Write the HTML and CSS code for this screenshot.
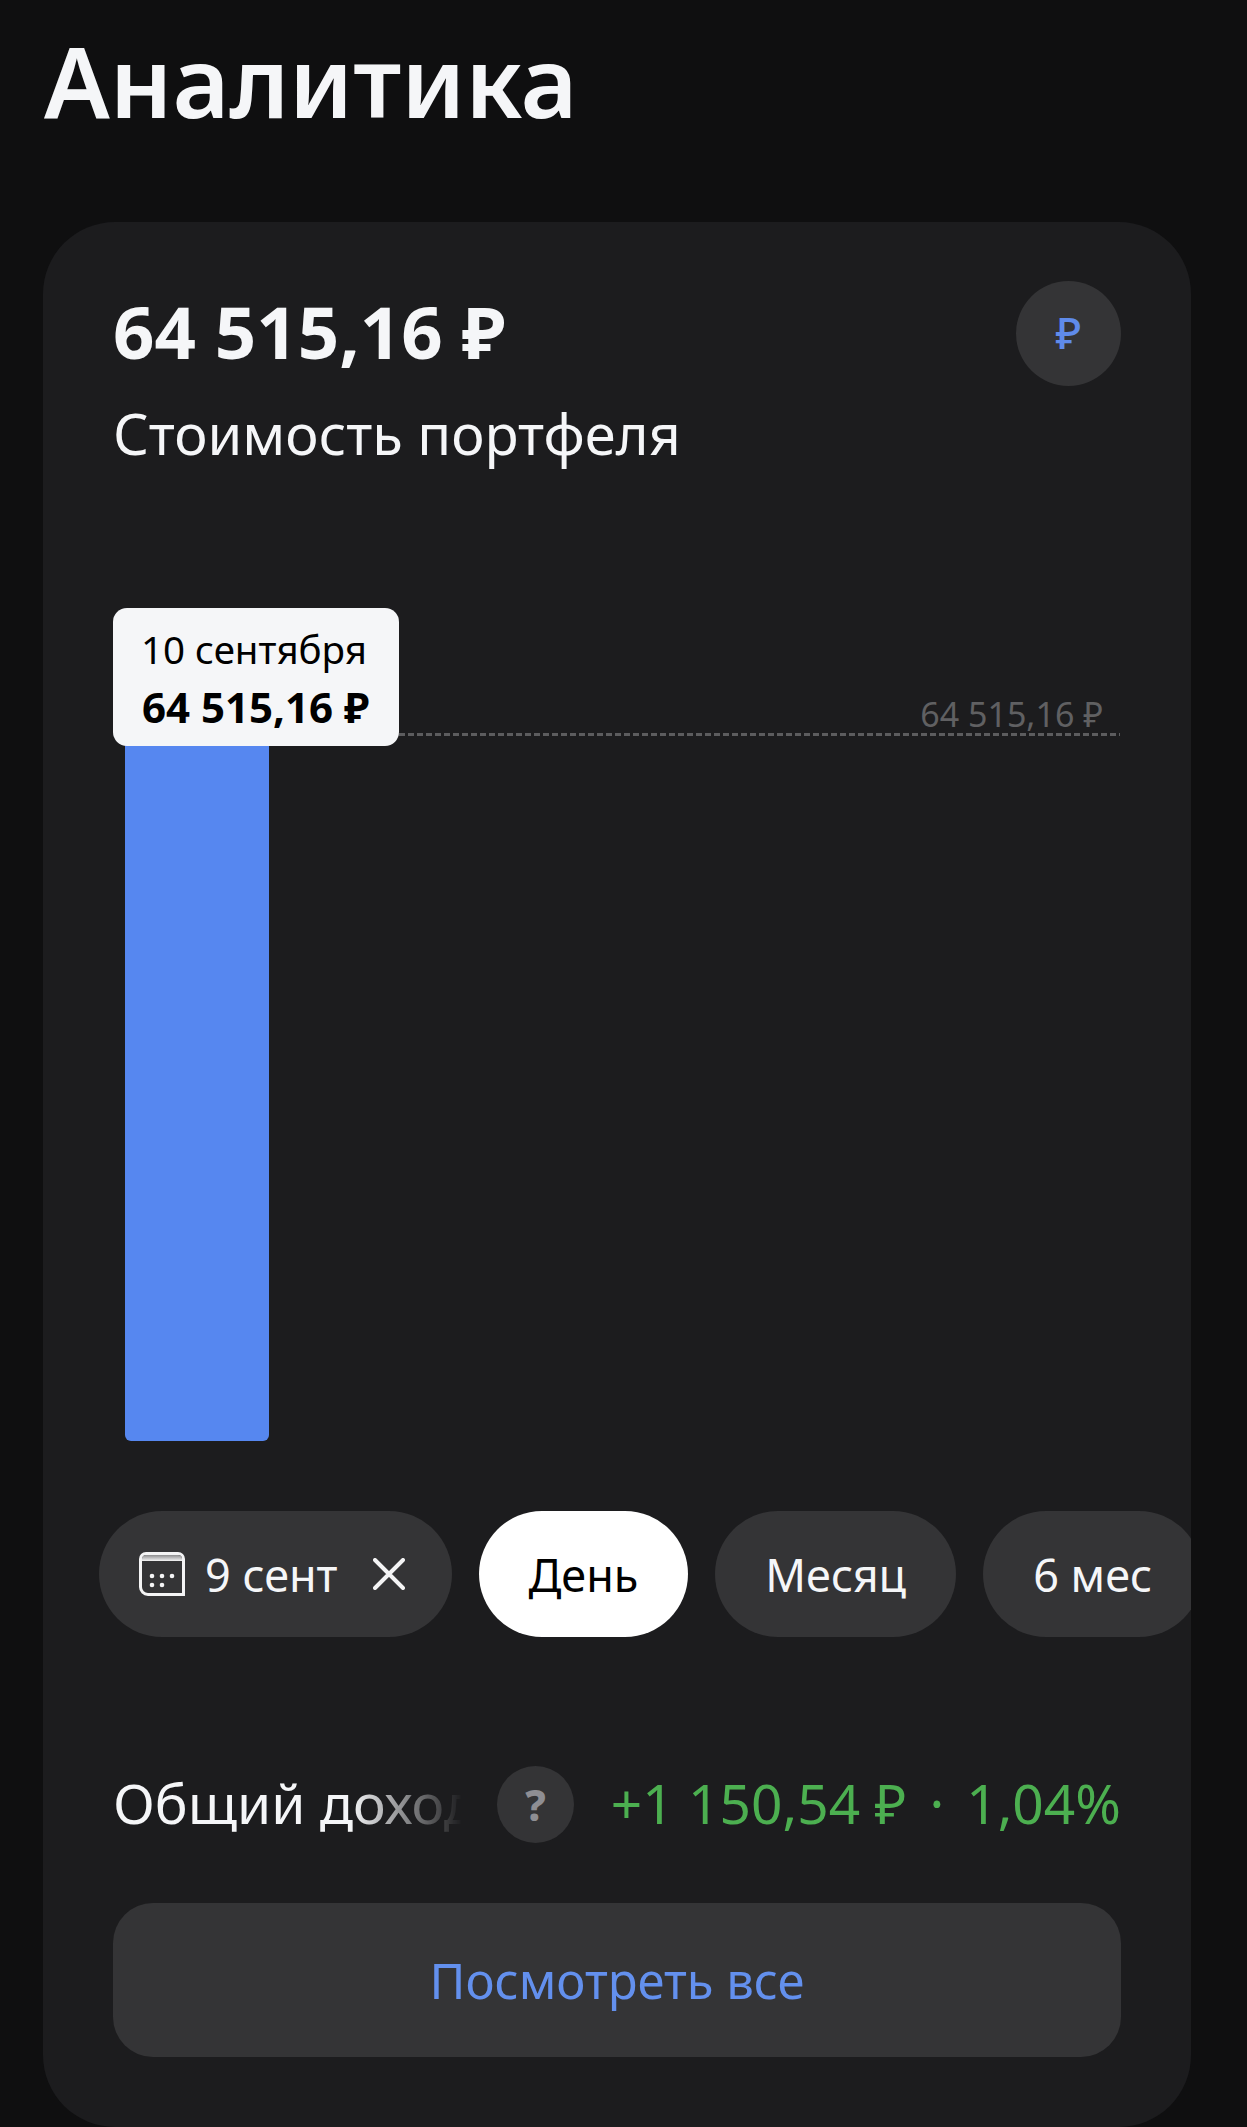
FILE: index.html
```html
<!DOCTYPE html>
<html lang="ru">
<head>
  <meta charset="UTF-8" />
  <title>Аналитика</title>
  <link rel="stylesheet" href="styles.css">
</head>
<body>
  <h1 class="page-title">Аналитика</h1>

  <section class="card">
    <div class="card-head">
      <div>
        <div class="total">64 515,16 ₽</div>
        <div class="subtitle">Стоимость портфеля</div>
      </div>
      <div class="currency">₽</div>
    </div>

    <div class="chart">
      <div class="bar"></div>
      <div class="max-line"></div>
      <div class="max-label">64 515,16 ₽</div>
      <div class="tooltip">
        <div class="tooltip-date">10 сентября</div>
        <div class="tooltip-value">64 515,16 ₽</div>
      </div>
    </div>

    <div class="chips">
      <div class="chip chip-date">
        <svg class="cal-icon" viewBox="0 0 46 44">
          <defs>
            <linearGradient id="calTop" x1="0" y1="0" x2="0" y2="1">
              <stop offset="0" stop-color="#8c8c8e"/>
              <stop offset="1" stop-color="#f4f4f5"/>
            </linearGradient>
          </defs>
          <path d="M7 1.500H39A5.500 5.500 0 0 1 44.500 7V42.500H9A7.500 7.500 0 0 1 1.500 35V7A5.500 5.500 0 0 1 7 1.500Z" fill="none" stroke="#f4f4f5" stroke-width="3"/>
          <path d="M3 9V7A4 4 0 0 1 7 3H39A4 4 0 0 1 43 7V9Z" fill="url(#calTop)"/>
          <circle cx="13" cy="24" r="2.300" fill="#f4f4f5"/>
          <circle cx="23" cy="24" r="2.300" fill="#f4f4f5"/>
          <circle cx="33" cy="24" r="2.300" fill="#f4f4f5"/>
          <circle cx="13" cy="33" r="2.300" fill="#f4f4f5"/>
          <circle cx="23" cy="33" r="2.300" fill="#f4f4f5"/>
        </svg>
        <span>9 сент</span>
        <svg class="close-icon" viewBox="0 0 32 32">
          <path d="M2 2L30 30M30 2L2 30" fill="none" stroke="#f4f4f5" stroke-width="4" stroke-linecap="round"/>
        </svg>
      </div>
      <div class="chip chip-active">День</div>
      <div class="chip">Месяц</div>
      <div class="chip">6 мес</div>
    </div>

    <div class="income">
      <span class="income-label">Общий доход</span>
      <span class="help">?</span>
      <span class="income-value">+1 150,54 ₽<span class="dot">·</span>1,04%</span>
    </div>

    <button class="view-all">Посмотреть все</button>
  </section>
</body>
</html>
```

FILE: styles.css
```css
body {
  margin: 0;
  height: 2127px;
  overflow: hidden;
  background: #0f0f10;
  color: #f5f6f8;
  font-family: "Noto Sans", sans-serif;
}
.page-title {
  margin: 0;
  height: 222px;
  padding-left: 44px;
  box-sizing: border-box;
  font-size: 98px;
  font-weight: 600;
  line-height: 160px;
}
.card {
  margin: 0 56px 0 43px;
  height: 1905px;
  box-sizing: border-box;
  padding: 59px 70px 0 70px;
  background: #1c1c1e;
  border-radius: 72px;
}
.card-head {
  display: flex;
  justify-content: space-between;
  align-items: flex-start;
}
.total {
  font-size: 72.500px;
  font-weight: 700;
  line-height: 100px;
}
.subtitle {
  margin-top: 17px;
  font-size: 56px;
  font-weight: 400;
  line-height: 70px;
}
.currency {
  width: 105px;
  height: 105px;
  border-radius: 50%;
  background: #343436;
  color: #5f8bea;
  font-size: 44px;
  font-weight: 500;
  line-height: 102px;
  text-align: center;
}
.chart {
  position: relative;
  margin-top: 140px;
  height: 833px;
}
.bar {
  position: absolute;
  left: 12px;
  top: 100px;
  bottom: 0;
  width: 144px;
  background: #5687f0;
  border-radius: 0 0 6px 6px;
}
.max-line {
  position: absolute;
  left: 286px;
  right: 1px;
  top: 125px;
  height: 3px;
  background: repeating-linear-gradient(90deg, #5c5c5e 0 6px, transparent 6px 9px);
}
.max-label {
  position: absolute;
  right: 18px;
  top: 81px;
  color: #606062;
  font-size: 34px;
  font-weight: 400;
  line-height: 50px;
}
.tooltip {
  position: absolute;
  left: 0;
  top: 0;
  width: 286px;
  height: 138px;
  box-sizing: border-box;
  padding: 16px 0 0 28px;
  background: #f5f6f8;
  border-radius: 14px;
  color: #000;
}
.tooltip-date {
  font-size: 38.500px;
  font-weight: 400;
  line-height: 50px;
}
.tooltip-value {
  margin: 8px 0 0 1px;
  font-size: 42px;
  font-weight: 700;
  line-height: 50px;
}
.chips {
  display: flex;
  gap: 27px;
  margin: 70px -70px 0 -14px;
  overflow: hidden;
}
.chip {
  flex: none;
  display: flex;
  align-items: center;
  height: 126px;
  padding: 0 50px;
  background: #343436;
  border-radius: 63px;
  font-size: 45px;
  font-weight: 400;
}
.chip-date {
  padding: 0 47px 0 40px;
}
.chip-active {
  background: #fff;
  color: #000;
}
.cal-icon {
  width: 46px;
  height: 44px;
  margin-right: 20px;
}
.close-icon {
  width: 32px;
  height: 32px;
  margin-left: 35px;
}
.income {
  display: flex;
  align-items: center;
  margin-top: 129px;
  height: 77px;
}
.income-label {
  width: 349px;
  padding-bottom: 4px;
  overflow: hidden;
  white-space: nowrap;
  font-size: 55px;
  font-weight: 400;
  -webkit-mask-image: linear-gradient(90deg, #000 68%, transparent 100%);
  mask-image: linear-gradient(90deg, #000 68%, transparent 100%);
}
.help {
  flex: none;
  width: 77px;
  height: 77px;
  margin-left: 35px;
  border-radius: 50%;
  background: #343436;
  color: #8e8e93;
  font-size: 42px;
  font-weight: 800;
  line-height: 77px;
  text-align: center;
}
.income-value {
  margin-left: auto;
  padding-bottom: 4px;
  color: #4caf50;
  font-size: 55px;
  font-weight: 400;
  white-space: nowrap;
}
.dot {
  margin: 0 22px 0 23px;
}
.view-all {
  display: block;
  width: 100%;
  height: 154px;
  margin-top: 60px;
  padding: 0;
  border: none;
  border-radius: 40px;
  background: #343436;
  color: #6390ee;
  font-family: inherit;
  font-size: 49px;
  font-weight: 400;
}
```
